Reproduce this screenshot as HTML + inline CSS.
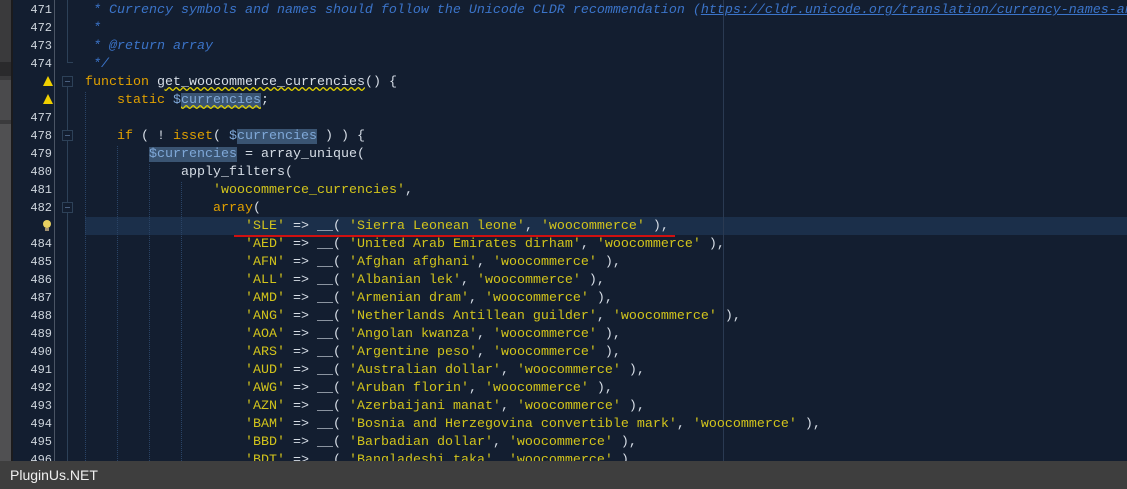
<!DOCTYPE html><html><head><style>
body{margin:0;width:1127px;height:489px;overflow:hidden;background:#131e30;position:relative;font-family:"Liberation Mono",monospace;}
.lp{position:absolute;left:0;top:0;width:11px;height:461px;background:#3a3a3c}
.lp2{position:absolute;left:11px;top:0;width:2px;height:461px;background:#1b1b1d}
.gd{position:absolute;left:54px;top:0;width:1px;height:461px;background:#4a5464}
.fl{position:absolute;left:67px;width:1px;background:#2d4158}
.fb{position:absolute;left:62px;width:9px;height:9px;border:1px solid #2d4158;background:#131e30}
.fb:after{content:"";position:absolute;left:2px;top:4px;width:5px;height:1px;background:#4a6080}
.ln{position:absolute;left:14px;width:38px;text-align:right;color:#cfd6de;font-size:12px;line-height:18px;height:18px}
.code{position:absolute;left:0;top:0;width:1127px;height:461px;overflow:hidden}
.inner{position:absolute;left:0;top:5px;width:1127px}
.c{position:absolute;left:85px;font-size:13.33px;line-height:18px;height:18px;white-space:pre;color:#d6dde6}
.cm{color:#3b74c9;font-style:italic}
.k{color:#e0a000}.s{color:#d2c41c}.v{color:#7fa8d8}
.sel{background:#3a5472}
.hl{position:absolute;left:85px;top:217px;width:1042px;height:18px;background:#1b2f4a}
.ig{position:absolute;border-left:1px dotted #2a4466;width:0}
.vl{position:absolute;left:723px;top:0;width:1px;height:461px;background:#2a3a52}
.sb{position:absolute;left:0;top:461px;width:1127px;height:28px;background:#3e3e3e;color:#f0f0f0;font-family:"Liberation Sans",sans-serif;font-size:14px;line-height:28px;padding-left:10px;box-sizing:border-box}
.warn{position:absolute;left:43px;width:0;height:0;border-left:5px solid transparent;border-right:5px solid transparent;border-bottom:10px solid #f0d000}
</style></head><body>
<div class="lp"></div><div class="lp2"></div>
<div style="position:absolute;left:0;top:62px;width:11px;height:14px;background:#2a2a2c"></div>
<div style="position:absolute;left:0;top:80px;width:11px;height:40px;background:#4a4a4c"></div>
<div style="position:absolute;left:0;top:124px;width:11px;height:337px;background:#505052"></div>
<div class="gd"></div>
<div class="hl"></div>
<div class="vl"></div>
<div class="fl" style="top:0;height:62px"></div>
<div style="position:absolute;left:67px;top:62px;width:6px;height:1px;background:#2d4158"></div>
<div class="fl" style="top:86px;height:375px"></div>
<div class="fb" style="top:76px"></div>
<div class="fb" style="top:130px"></div>
<div class="fb" style="top:202px"></div>
<div class="ig" style="left:85px;top:92px;height:369px"></div>
<div class="ig" style="left:117px;top:146px;height:315px"></div>
<div class="ig" style="left:149px;top:164px;height:297px"></div>
<div class="ig" style="left:181px;top:182px;height:279px"></div>
<div class="ln" style="top:1px">471</div><div class="ln" style="top:19px">472</div><div class="ln" style="top:37px">473</div><div class="ln" style="top:55px">474</div>
<div class="warn" style="top:76px"></div><div class="warn" style="top:94px"></div>
<div class="ln" style="top:109px">477</div><div class="ln" style="top:127px">478</div><div class="ln" style="top:145px">479</div><div class="ln" style="top:163px">480</div><div class="ln" style="top:181px">481</div><div class="ln" style="top:199px">482</div>
<div style="position:absolute;left:43px;top:220px;width:8px;height:8px;border-radius:50%;background:#e8d060"></div><div style="position:absolute;left:45px;top:228px;width:4px;height:3px;background:#a09070"></div>
<div class="ln" style="top:235px">484</div><div class="ln" style="top:253px">485</div><div class="ln" style="top:271px">486</div><div class="ln" style="top:289px">487</div><div class="ln" style="top:307px">488</div><div class="ln" style="top:325px">489</div><div class="ln" style="top:343px">490</div><div class="ln" style="top:361px">491</div><div class="ln" style="top:379px">492</div><div class="ln" style="top:397px">493</div><div class="ln" style="top:415px">494</div><div class="ln" style="top:433px">495</div><div class="ln" style="top:451px">496</div>
<div class="code"><div class="inner">
<div class="c cm" style="top:-3px"> * Currency symbols and names should follow the Unicode CLDR recommendation (<span style="text-decoration:underline">https://cldr.unicode.org/translation/currency-names-and-symbols</span></div>
<div class="c cm" style="top:15px"> *</div>
<div class="c cm" style="top:33px"> * @return array</div>
<div class="c cm" style="top:51px"> */</div>
<div class="c" style="top:69px"><span class="k">function</span> <span style="text-decoration:underline wavy #e0d000">get_woocommerce_currencies</span>() {</div>
<div class="c" style="top:87px">    <span class="k">static</span> <span class="v">$</span><span class="v sel" style="text-decoration:underline wavy #e0d000">currencies</span>;</div>
<div class="c" style="top:123px">    <span class="k">if</span> ( ! <span class="k">isset</span>( <span class="v">$</span><span class="v sel">currencies</span> ) ) {</div>
<div class="c" style="top:141px">        <span class="v sel">$currencies</span> = array_unique(</div>
<div class="c" style="top:159px">            apply_filters(</div>
<div class="c" style="top:177px">                <span class="s">'woocommerce_currencies'</span>,</div>
<div class="c" style="top:195px">                <span class="k">array</span>(</div>
<div class="c" style="top:213px">                    <span class="s">'SLE'</span> =&gt; __( <span class="s">'Sierra Leonean leone'</span>, <span class="s">'woocommerce'</span> ),</div>
<div class="c" style="top:231px">                    <span class="s">'AED'</span> =&gt; __( <span class="s">'United Arab Emirates dirham'</span>, <span class="s">'woocommerce'</span> ),</div>
<div class="c" style="top:249px">                    <span class="s">'AFN'</span> =&gt; __( <span class="s">'Afghan afghani'</span>, <span class="s">'woocommerce'</span> ),</div>
<div class="c" style="top:267px">                    <span class="s">'ALL'</span> =&gt; __( <span class="s">'Albanian lek'</span>, <span class="s">'woocommerce'</span> ),</div>
<div class="c" style="top:285px">                    <span class="s">'AMD'</span> =&gt; __( <span class="s">'Armenian dram'</span>, <span class="s">'woocommerce'</span> ),</div>
<div class="c" style="top:303px">                    <span class="s">'ANG'</span> =&gt; __( <span class="s">'Netherlands Antillean guilder'</span>, <span class="s">'woocommerce'</span> ),</div>
<div class="c" style="top:321px">                    <span class="s">'AOA'</span> =&gt; __( <span class="s">'Angolan kwanza'</span>, <span class="s">'woocommerce'</span> ),</div>
<div class="c" style="top:339px">                    <span class="s">'ARS'</span> =&gt; __( <span class="s">'Argentine peso'</span>, <span class="s">'woocommerce'</span> ),</div>
<div class="c" style="top:357px">                    <span class="s">'AUD'</span> =&gt; __( <span class="s">'Australian dollar'</span>, <span class="s">'woocommerce'</span> ),</div>
<div class="c" style="top:375px">                    <span class="s">'AWG'</span> =&gt; __( <span class="s">'Aruban florin'</span>, <span class="s">'woocommerce'</span> ),</div>
<div class="c" style="top:393px">                    <span class="s">'AZN'</span> =&gt; __( <span class="s">'Azerbaijani manat'</span>, <span class="s">'woocommerce'</span> ),</div>
<div class="c" style="top:411px">                    <span class="s">'BAM'</span> =&gt; __( <span class="s">'Bosnia and Herzegovina convertible mark'</span>, <span class="s">'woocommerce'</span> ),</div>
<div class="c" style="top:429px">                    <span class="s">'BBD'</span> =&gt; __( <span class="s">'Barbadian dollar'</span>, <span class="s">'woocommerce'</span> ),</div>
<div class="c" style="top:447px">                    <span class="s">'BDT'</span> =&gt; __( <span class="s">'Bangladeshi taka'</span>, <span class="s">'woocommerce'</span> ),</div>
</div></div>
<div style="position:absolute;left:234px;top:235px;width:441px;height:2px;background:#d01010"></div>
<div class="sb">PluginUs.NET</div>
</body></html>
